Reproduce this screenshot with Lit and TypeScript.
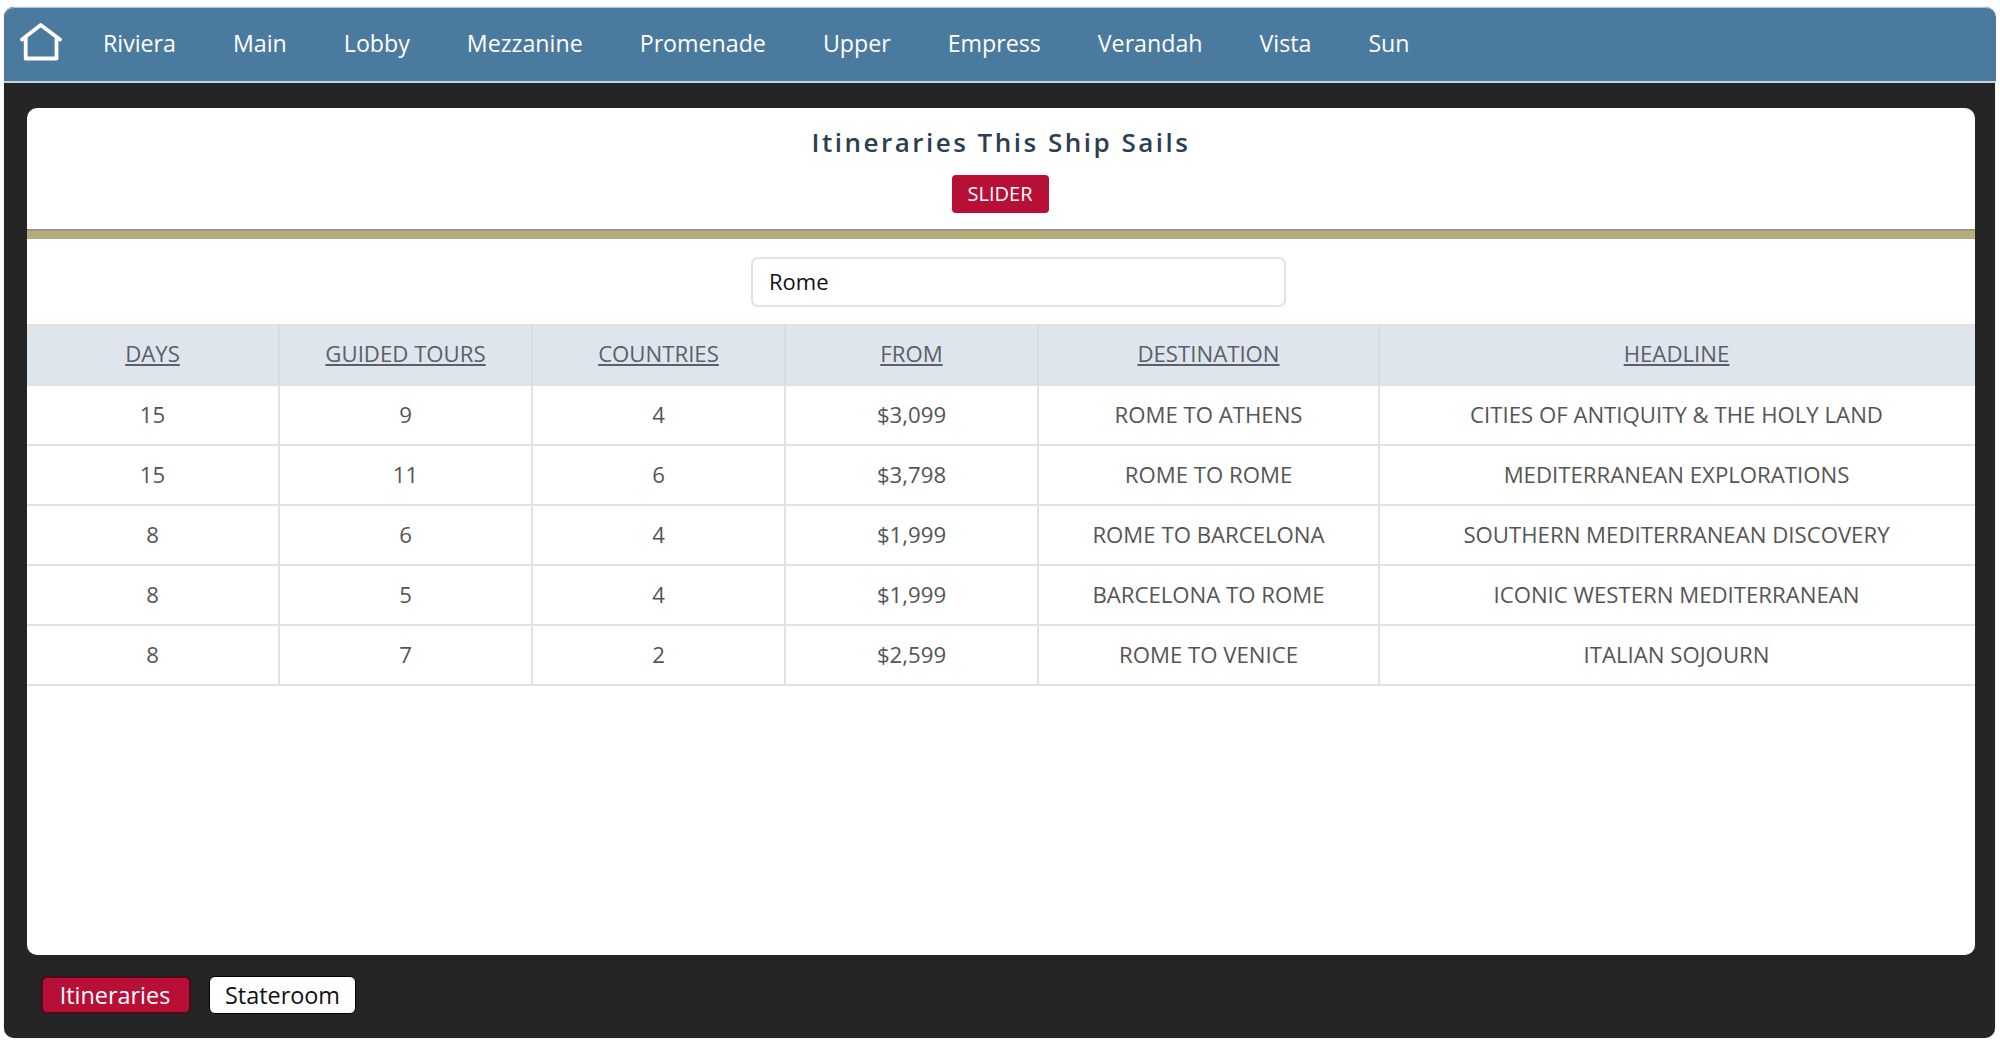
import { LitElement, html, css } from 'lit';
import { customElement } from 'lit/decorators.js';

const decks = ['Riviera', 'Main', 'Lobby', 'Mezzanine', 'Promenade', 'Upper', 'Empress', 'Verandah', 'Vista', 'Sun'];
const columns = ['DAYS', 'GUIDED TOURS', 'COUNTRIES', 'FROM', 'DESTINATION', 'HEADLINE'];
const rows = [
  ['15', '9', '4', '$3,099', 'ROME TO ATHENS', 'CITIES OF ANTIQUITY & THE HOLY LAND'],
  ['15', '11', '6', '$3,798', 'ROME TO ROME', 'MEDITERRANEAN EXPLORATIONS'],
  ['8', '6', '4', '$1,999', 'ROME TO BARCELONA', 'SOUTHERN MEDITERRANEAN DISCOVERY'],
  ['8', '5', '4', '$1,999', 'BARCELONA TO ROME', 'ICONIC WESTERN MEDITERRANEAN'],
  ['8', '7', '2', '$2,599', 'ROME TO VENICE', 'ITALIAN SOJOURN'],
];

@customElement('app-root')
export class AppRoot extends LitElement {
  static styles = css`
    :host {
      display: block;
      height: 1042px;
      background: #fff;
      font-family: 'Open Sans', 'Noto Sans', sans-serif;
      padding: 7px 5px 4px 4px;
      box-sizing: border-box;
      overflow: hidden;
    }
    .frame {
      height: 100%;
      display: flex;
      flex-direction: column;
      background: #252525;
      border-radius: 10px;
      box-shadow: 0 0 1px #888;
    }
    .nav {
      height: 76px;
      flex: none;
      box-sizing: border-box;
      display: flex;
      align-items: center;
      padding: 0 0 3px 15px;
      margin-right: -1px;
      background: #4a7a9e;
      border-top: 1px solid #a9c5d8;
      border-bottom: 2px solid #c3d3de;
      border-radius: 10px 10px 0 0;
    }
    .home {
      width: 44px;
      height: 40px;
      margin-right: 40px;
      flex: none;
    }
    .links {
      display: flex;
      gap: 57px;
    }
    .links a {
      color: #fff;
      font-size: 23.2px;
      line-height: 30px;
    }
    .panel {
      flex: 1;
      margin: 25px 20px 0 23px;
      background: #fff;
      border-radius: 10px;
      display: flex;
      flex-direction: column;
      overflow: hidden;
    }
    .head {
      height: 131px;
      flex: none;
      box-sizing: border-box;
      display: flex;
      flex-direction: column;
      align-items: center;
      padding-top: 17px;
      border-bottom: 8px solid #b8ab7c;
      box-shadow: inset 0 -2px 0 #9a9488;
    }
    h1 {
      margin: 0;
      font-size: 26px;
      line-height: 34px;
      font-weight: 600;
      letter-spacing: 2.5px;
      color: #2c3e50;
    }
    .slider {
      margin-top: 16px;
      width: 97px;
      height: 38px;
      box-sizing: border-box;
      padding-bottom: 2px;
      display: flex;
      align-items: center;
      justify-content: center;
      background: #b80f37;
      color: #fff;
      font-size: 20px;
      border-radius: 4px;
      margin-left: -2px;
    }
    .search {
      height: 85px;
      flex: none;
      box-sizing: border-box;
      padding-left: 724px;
      padding-top: 18px;
    }
    .search input {
      display: block;
      width: 535px;
      height: 50px;
      box-sizing: border-box;
      padding: 0 16px 2px;
      border: 2px solid #e2e2e2;
      border-radius: 7px;
      background: #fff;
      font: 22px 'Open Sans', sans-serif;
      color: #111;
      outline: none;
    }
    .table {
      display: grid;
      grid-template-columns: 253px 253px 253px 253px 341px 1fr;
    }
    .cell {
      height: 60px;
      box-sizing: border-box;
      display: flex;
      align-items: center;
      justify-content: center;
      padding-bottom: 2px;
      font-size: 22.2px;
      color: #555;
      border-bottom: 2px solid #e2e2e2;
      border-right: 2px solid #e2e2e2;
    }
    .cell:nth-child(6n) {
      border-right: none;
      padding-right: 2px;
    }
    .th {
      height: 62px;
      padding-bottom: 4px;
      background: #dee5ed;
      border-top: 2px solid #e2e2e2;
      border-right-color: #d6dce3;
      text-decoration: underline;
      color: #5b6069;
    }
    .tabs {
      height: 83px;
      flex: none;
      box-sizing: border-box;
      display: flex;
      align-items: flex-start;
      gap: 18px;
      padding: 21px 0 0 37px;
    }
    .tab {
      height: 38px;
      box-sizing: border-box;
      display: flex;
      align-items: center;
      justify-content: center;
      font-size: 23.4px;
      border-radius: 6px;
      background: #fff;
      color: #111;
      width: 147px;
      border: 1px solid #000;
    }
    .tab.on {
      background: #b80f37;
      color: #fff;
      width: 150px;
      padding-right: 2px;
      border: 2px solid #4a0a18;
    }
  `;

  render() {
    return html`
      <div class="frame">
        <div class="nav">
          <svg class="home" viewBox="0 0 44 40" fill="none" stroke="#fff" stroke-width="3.8" stroke-linejoin="round" stroke-linecap="round">
            <path d="M3 16.5 L21.7 2 L41 16.5 M6.7 15 V35.5 H37.5 V15" />
          </svg>
          <div class="links">${decks.map((d) => html`<a>${d}</a>`)}</div>
        </div>
        <div class="panel">
          <div class="head">
            <h1>Itineraries This Ship Sails</h1>
            <div class="slider">SLIDER</div>
          </div>
          <div class="search"><input .value=${'Rome'} /></div>
          <div class="table">
            ${columns.map((c) => html`<div class="cell th">${c}</div>`)}
            ${rows.map((r) => r.map((v) => html`<div class="cell">${v}</div>`))}
          </div>
        </div>
        <div class="tabs">
          <div class="tab on">Itineraries</div>
          <div class="tab">Stateroom</div>
        </div>
      </div>
    `;
  }
}
